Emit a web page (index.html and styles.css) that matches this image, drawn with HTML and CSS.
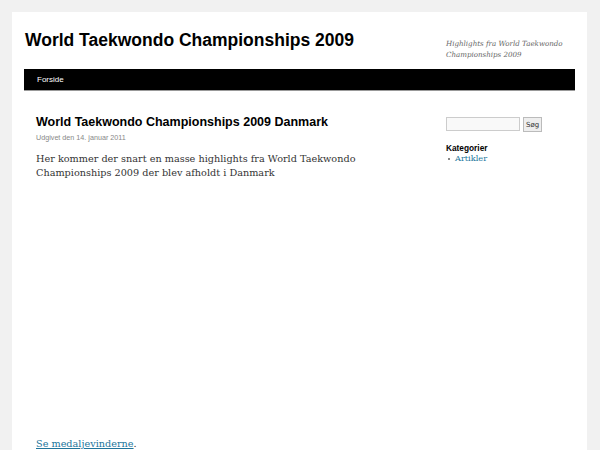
FILE: index.html
```html
<!DOCTYPE html>
<html lang="da">
<head>
<meta charset="utf-8">
<title>World Taekwondo Championships 2009</title>
<link rel="stylesheet" href="styles.css">
</head>
<body>
<div class="wrapper">
  <header class="header">
    <h1 class="site-title">World Taekwondo Championships 2009</h1>
    <p class="site-desc">Highlights fra World Taekwondo Championships 2009</p>
  </header>
  <nav class="nav"><a href="#">Forside</a></nav>
  <div class="main">
    <div class="content">
      <h2 class="post-title">World Taekwondo Championships 2009 Danmark</h2>
      <div class="meta">Udgivet den 14. januar 2011</div>
      <p class="text">Her kommer der snart en masse highlights fra World Taekwondo Championships 2009 der blev afholdt i Danmark</p>
      <div class="video"></div>
      <p class="text"><a href="#">Se medaljevinderne</a>.</p>
    </div>
    <aside class="sidebar">
      <form class="search"><input type="text" class="search-input"><button type="button" class="search-btn">Søg</button></form>
      <h3 class="widget-title">Kategorier</h3>
      <ul class="cats"><li><a href="#">Artikler</a></li></ul>
    </aside>
  </div>
</div>
</body>
</html>
```
FILE: styles.css
```css
html, body { margin: 0; padding: 0; }
body {
  background: #f1f1f1;
  padding-top: 12px;
  font-family: "Liberation Sans", Arial, sans-serif;
  overflow: hidden;
  height: 438px;
}
.wrapper {
  margin-left: 12px;
  width: 551px;
  padding: 0 12px;
  background: #fff;
  height: 460px;
}
.header {
  display: flex;
  justify-content: space-between;
  padding-top: 17px;
  height: 40px;
}
.site-title {
  margin: 0 0 0 1px;
  font-size: 17.5px;
  line-height: 22px;
  font-weight: bold;
  color: #000;
}
.site-desc {
  margin: 9px 0 0 0;
  width: 129px;
  font-family: "DejaVu Serif", Georgia, serif;
  font-style: italic;
  font-size: 7.1px;
  line-height: 11px;
  color: #666;
}
.nav {
  background: #000;
  height: 21px;
  border-bottom: 1px solid #999;
  display: flex;
  align-items: center;
  padding-left: 13px;
}
.nav a {
  color: #fff;
  text-decoration: none;
  font-size: 8px;
}
.main {
  display: flex;
  justify-content: space-between;
  padding: 23px 0 0 12px;
}
.content { width: 380px; }
.post-title {
  margin: 0;
  font-size: 12.5px;
  line-height: 16px;
  font-weight: bold;
  color: #000;
}
.meta {
  font-size: 7.2px;
  color: #888;
  margin-top: 3px;
  line-height: 9px;
}
.text {
  margin: 10px 0 0;
  font-family: "DejaVu Serif", Georgia, serif;
  font-size: 9.7px;
  line-height: 14px;
  color: #333;
}
.text a { color: #21759b; }
.video { height: 247px; }
.sidebar { width: 129px; padding-top: 3px; }
.search { display: flex; gap: 3px; margin: 0; }
.search-input {
  width: 70px;
  height: 10px;
  padding: 1px;
  border: 1px solid #ccc;
  background: #f9f9f9;
  margin: 0;
}
.search-btn {
  height: 15px;
  padding: 0 2px;
  font-size: 7px;
  font-family: "DejaVu Sans", sans-serif;
  border: 1px solid #bbb;
  background: #eee;
  color: #333;
  margin: 0;
}
.widget-title {
  margin: 11px 0 0;
  font-size: 8.3px;
  line-height: 10px;
  font-weight: bold;
  color: #000;
}
.cats {
  margin: 0;
  padding: 0;
  list-style: none;
  font-family: "DejaVu Serif", Georgia, serif;
  font-size: 8.2px;
  line-height: 11px;
  color: #666;
}
.cats li { display: flex; align-items: center; }
.cats li::before {
  content: "";
  width: 2px;
  height: 2px;
  background: #888;
  margin: 0 5px 0 2px;
}
.cats a { color: #21759b; text-decoration: none; }
```
